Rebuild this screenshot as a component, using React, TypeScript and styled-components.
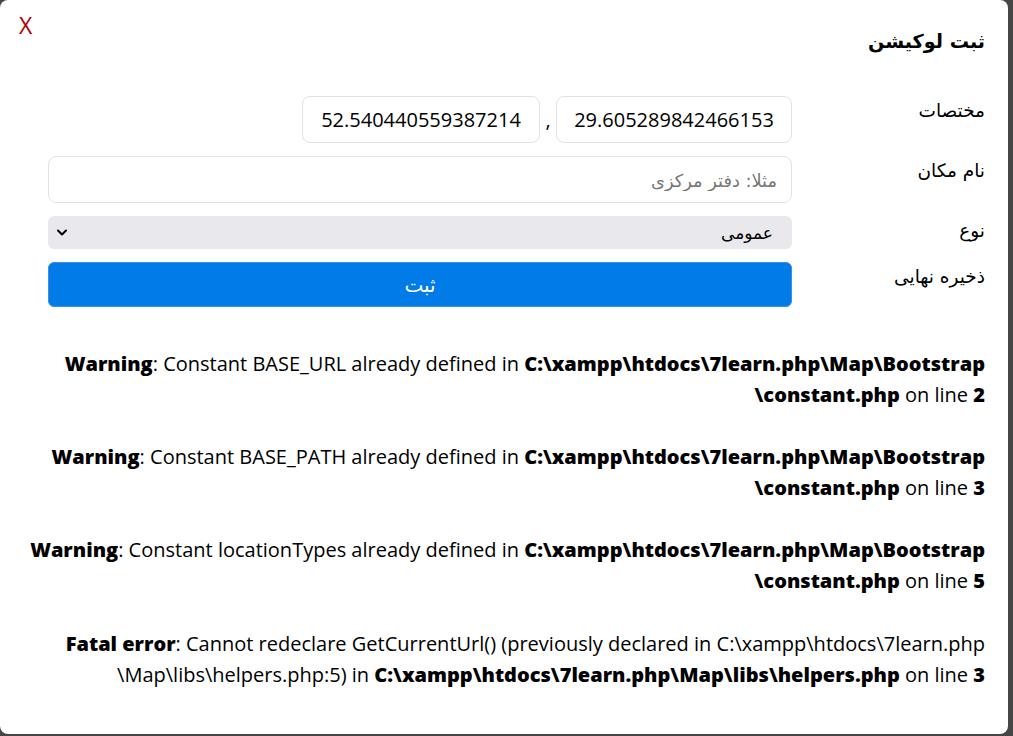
import React from "react";
import styled, { createGlobalStyle } from "styled-components";

const Global = createGlobalStyle`
  html, body { margin: 0; padding: 0; }
  body {
    background: #464646;
    font-family: "Open Sans", "DejaVu Sans", sans-serif;
    color: #000;
    overflow: hidden;
  }
`;

const Modal = styled.div`
  position: relative;
  box-sizing: border-box;
  width: 1008px;
  height: 734px;
  background: #fff;
  border-radius: 8px;
  overflow: hidden;
  direction: rtl;
  padding: 26px 23px 0 28px;
`;

const Close = styled.button`
  position: absolute;
  left: 19px;
  top: 10px;
  border: none;
  background: none;
  padding: 0;
  font-family: "Open Sans", sans-serif;
  font-size: 23px;
  line-height: 30px;
  color: #b50000;
  cursor: pointer;
`;

const Title = styled.h2`
  margin: 0;
  font-family: "DejaVu Sans", sans-serif;
  font-size: 19.2px;
  font-weight: 700;
  line-height: 32px;
`;

const Form = styled.form`
  display: flex;
  flex-direction: column;
  gap: 13px;
  margin-top: 38px;
  margin-left: 20px;
`;

const Row = styled.div`
  display: flex;
  align-items: flex-start;
`;

const Label = styled.label`
  flex: 0 0 193px;
  font-family: "DejaVu Sans", sans-serif;
  font-size: 18.5px;
  line-height: 30px;
`;

const Field = styled.div`
  flex: 1;
  display: flex;
  align-items: center;
  position: relative;
`;

const Input = styled.input<{ $w?: number }>`
  box-sizing: border-box;
  height: 47px;
  width: ${(p) => (p.$w ? `${p.$w}px` : "100%")};
  border: 1px solid #e2e2e2;
  border-radius: 8px;
  padding: 0 14px;
  font-family: "Open Sans", "DejaVu Sans", sans-serif;
  font-size: 20px;
  color: #000;
  background: #fff;
  outline: none;
  text-align: ${(p) => (p.$w ? "center" : "right")};
  &::placeholder {
    color: #777;
    font-family: "DejaVu Sans", sans-serif;
    font-size: 17.8px;
  }
`;

const Comma = styled.span`
  width: 16px;
  text-align: center;
  font-size: 20px;
  line-height: 20px;
`;

const Select = styled.select`
  box-sizing: border-box;
  width: 100%;
  height: 33px;
  appearance: none;
  -webkit-appearance: none;
  border: none;
  border-radius: 6px;
  background: #e9e9ed;
  padding: 0 19px 0 30px;
  font-family: "DejaVu Sans", sans-serif;
  font-size: 17px;
  color: #000;
  direction: rtl;
  outline: none;
`;

const Chevron = styled.svg`
  position: absolute;
  left: 8px;
  top: 12px;
  pointer-events: none;
`;

const Submit = styled.button`
  box-sizing: border-box;
  width: 100%;
  height: 45px;
  border: 1px solid #3a8fe6;
  border-radius: 6px;
  background: #007be8;
  color: #fff;
  font-family: "DejaVu Sans", sans-serif;
  font-size: 20px;
  cursor: pointer;
`;

const Messages = styled.div`
  margin-top: 10px;
`;

const Message = styled.div`
  padding-top: 31px;
`;

const Line = styled.div`
  direction: ltr;
  text-align: right;
  white-space: nowrap;
  font-family: "Open Sans", sans-serif;
  font-size: 20px;
  line-height: 31.1px;
  b { font-weight: 800; }
`;

export default function App() {
  return (
    <>
      <Global />
      <Modal>
        <Close type="button">X</Close>
        <Title>ثبت لوکیشن</Title>
        <Form onSubmit={(e) => e.preventDefault()}>
          <Row>
            <Label>مختصات</Label>
            <Field>
              <Input $w={236} defaultValue="29.605289842466153" />
              <Comma>,</Comma>
              <Input $w={238} defaultValue="52.540440559387214" />
            </Field>
          </Row>
          <Row>
            <Label>نام مکان</Label>
            <Field>
              <Input placeholder="مثلا: دفتر مرکزی" />
            </Field>
          </Row>
          <Row>
            <Label>نوع</Label>
            <Field>
              <Select defaultValue="0">
                <option value="0">عمومی</option>
              </Select>
              <Chevron width="12" height="9" viewBox="0 0 12 9">
                <path d="M2 2.5 L6 6.5 L10 2.5" fill="none" stroke="#000" strokeWidth="2" strokeLinecap="round" strokeLinejoin="round" />
              </Chevron>
            </Field>
          </Row>
          <Row>
            <Label>ذخیره نهایی</Label>
            <Field>
              <Submit type="submit">ثبت</Submit>
            </Field>
          </Row>
        </Form>
        <Messages>
          <Message>
            <Line>
              <b>Warning</b>: Constant BASE_URL already defined in <b>C:\xampp\htdocs\7learn.php\Map\Bootstrap</b>
            </Line>
            <Line>
              <b>\constant.php</b> on line <b>2</b>
            </Line>
          </Message>
          <Message>
            <Line>
              <b>Warning</b>: Constant BASE_PATH already defined in <b>C:\xampp\htdocs\7learn.php\Map\Bootstrap</b>
            </Line>
            <Line>
              <b>\constant.php</b> on line <b>3</b>
            </Line>
          </Message>
          <Message>
            <Line>
              <b>Warning</b>: Constant locationTypes already defined in <b>C:\xampp\htdocs\7learn.php\Map\Bootstrap</b>
            </Line>
            <Line>
              <b>\constant.php</b> on line <b>5</b>
            </Line>
          </Message>
          <Message>
            <Line>
              <b>Fatal error</b>: Cannot redeclare GetCurrentUrl() (previously declared in C:\xampp\htdocs\7learn.php
            </Line>
            <Line>
              \Map\libs\helpers.php:5) in <b>C:\xampp\htdocs\7learn.php\Map\libs\helpers.php</b> on line <b>3</b>
            </Line>
          </Message>
        </Messages>
      </Modal>
    </>
  );
}
